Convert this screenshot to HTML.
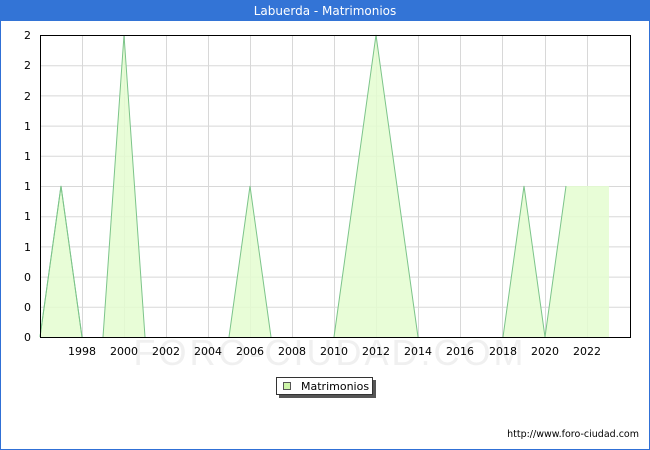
<!DOCTYPE html>
<html><head><style>
body{margin:0;width:650px;height:450px;background:#fff;overflow:hidden;font-family:"DejaVu Sans","Liberation Sans",sans-serif;}
.frame{position:absolute;left:0;top:0;width:648px;height:448px;border:1px solid #3070d6;}
.title{position:absolute;left:0;top:0;width:650px;height:21px;background:#3374d6;color:#fff;font-size:12px;text-align:center;line-height:22px;}
</style></head><body>
<div class="frame"></div>
<div class="title">Labuerda - Matrimonios</div>
<svg width="650" height="450" style="position:absolute;left:0;top:0">
<g stroke="#d8d8d8" stroke-width="1">
<line x1="40" x2="630" y1="65.7" y2="65.7"/><line x1="40" x2="630" y1="95.9" y2="95.9"/><line x1="40" x2="630" y1="126.1" y2="126.1"/><line x1="40" x2="630" y1="156.3" y2="156.3"/><line x1="40" x2="630" y1="186.5" y2="186.5"/><line x1="40" x2="630" y1="216.7" y2="216.7"/><line x1="40" x2="630" y1="246.9" y2="246.9"/><line x1="40" x2="630" y1="277.1" y2="277.1"/><line x1="40" x2="630" y1="307.3" y2="307.3"/>
<line x1="82.5" x2="82.5" y1="35" y2="337"/><line x1="124.5" x2="124.5" y1="35" y2="337"/><line x1="166.5" x2="166.5" y1="35" y2="337"/><line x1="208.5" x2="208.5" y1="35" y2="337"/><line x1="250.5" x2="250.5" y1="35" y2="337"/><line x1="292.5" x2="292.5" y1="35" y2="337"/><line x1="334.5" x2="334.5" y1="35" y2="337"/><line x1="376.5" x2="376.5" y1="35" y2="337"/><line x1="418.5" x2="418.5" y1="35" y2="337"/><line x1="460.5" x2="460.5" y1="35" y2="337"/><line x1="502.5" x2="502.5" y1="35" y2="337"/><line x1="545.5" x2="545.5" y1="35" y2="337"/><line x1="587.5" x2="587.5" y1="35" y2="337"/>
</g>
<text x="330" y="365" font-size="36" fill="#f0f0f0" text-anchor="middle" font-family="Liberation Sans" letter-spacing="3">FORO-CIUDAD.COM</text>
<polygon fill="#e4fdd0" fill-opacity="0.85" points="40,337 61,186 82,337 103,337 124,35 145,337 229,337 250,186 271,337 334,337 376,35 418,337 503,337 524,186 545,337 566,186 609,186 609,337"/>
<polyline fill="none" stroke="#7cc48a" stroke-width="1" points="40,337 61,186 82,337 M103,337"/>
<path fill="none" stroke="#7cc48a" stroke-width="1" d="M40,337 L61,186 L82,337 M103,337 L124,35 L145,337 M229,337 L250,186 L271,337 M334,337 L376,35 L418,337 M503,337 L524,186 L545,337 L566,186"/>
<rect x="40.5" y="35.5" width="590" height="302" fill="none" stroke="#000" stroke-width="1"/>
<g font-size="11" fill="#000" text-anchor="end">
<text x="31" y="39">2</text><text x="31" y="69">2</text><text x="31" y="100">2</text><text x="31" y="130">1</text><text x="31" y="160">1</text><text x="31" y="190">1</text><text x="31" y="220">1</text><text x="31" y="251">1</text><text x="31" y="281">0</text><text x="31" y="311">0</text><text x="31" y="341">0</text>
</g>
<g font-size="11" fill="#000" text-anchor="middle">
<text x="82" y="355">1998</text><text x="124" y="355">2000</text><text x="166" y="355">2002</text><text x="208" y="355">2004</text><text x="250" y="355">2006</text><text x="292" y="355">2008</text><text x="334" y="355">2010</text><text x="376" y="355">2012</text><text x="418" y="355">2014</text><text x="460" y="355">2016</text><text x="503" y="355">2018</text><text x="545" y="355">2020</text><text x="587" y="355">2022</text>
</g>
<rect x="279" y="380" width="97" height="18" fill="#555"/>
<rect x="276.5" y="377.5" width="96" height="17" fill="#fff" stroke="#333"/>
<rect x="283.5" y="382.5" width="7" height="7" fill="#cdf5a8" stroke="#555"/>
<text x="301" y="390" font-size="11" fill="#000">Matrimonios</text>
<text x="639" y="437" font-size="9.5" fill="#000" text-anchor="end">http://www.foro-ciudad.com</text>
</svg>
</body></html>
